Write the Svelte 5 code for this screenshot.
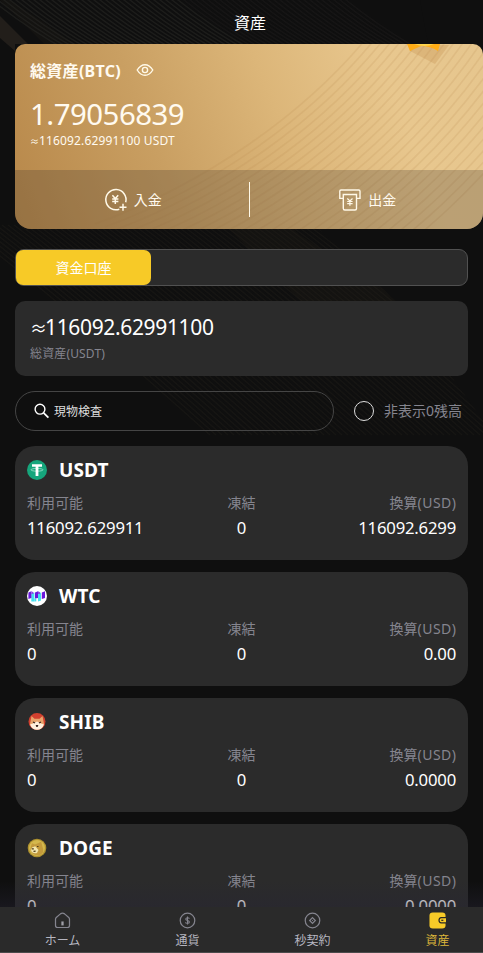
<script>
  const assets = [
    { name: 'USDT', free: '116092.629911', usd: '116092.6299' },
    { name: 'WTC', free: '0', usd: '0.00' },
    { name: 'SHIB', free: '0', usd: '0.0000' },
    { name: 'DOGE', free: '0', usd: '0.0000' },
  ];
  const tabs = ['ホーム', '通貨', '秒契約', '資産'];
  const lines = Array.from({ length: 60 }, (_, i) => i);
  const waves = Array.from({ length: 25 }, (_, i) => i);
</script>

<div class="app">
  <svg class="backdrop" viewBox="0 0 483 953" aria-hidden="true">
    <path d="M0 0L350 350L400 300L300 235Q150 90 10 0Z" fill="#171512" opacity=".6" />
    <path d="M0 16L28 44H15V51L0 38Z" fill="#221e1a" />
    {#each lines as i}
      <path d="M{i * 6 - 20} -10Q{i * 6 + 50} 50 {i * 6 + 150} 90" fill="none" stroke="#242321" stroke-width="1.4" opacity={i < 32 ? 0.7 : 0.35} />
      <path d="M{i * 6 - 40} 225Q{i * 6 + 60} 300 {i * 6 + 210} 435" fill="none" stroke="#26221d" stroke-width="1.4" opacity=".35" />
    {/each}
    <path d="M315 225L400 305L483 420V953H483V0H420Q440 120 483 225Z" fill="#0f0f0f" />
  </svg>

  <header>資産</header>

  <section class="gold">
    <svg class="pattern" viewBox="0 0 468 185" preserveAspectRatio="none" aria-hidden="true">
      {#each waves as i}
        <path d="M{80 + i * 10} {180 + i * 3}C{190 + i * 8} {140 + i * 3} {290 + i * 8} {70 + i * 3} {355 + i * 9} -10" fill="none" stroke="#ba8a4d" stroke-width="1.6" opacity=".17" />
      {/each}
      <path d="M395 7L420 20L434 1H393Z" fill="#b77a35" opacity=".22" />
      <path d="M392 0H425L423 7Q415 2 406 2L395 7Z" fill="#ffac16" />
      <path d="M399 0H419Q410 4 399 0Z" fill="#ffd54d" />
    </svg>
    <div class="balance">
      <div class="title">
        <b>総資産(BTC)</b>
        <svg width="18" height="14" viewBox="0 0 18 14" fill="none" stroke="#fff9e8" stroke-width="1.4"><path d="M1.2 7Q4.5 1.7 9 1.7T16.8 7Q13.5 12.3 9 12.3T1.2 7Z" /><circle cx="9" cy="7" r="2.6" /></svg>
      </div>
      <div class="btc">1.79056839</div>
      <div class="approx"><span class="about">≈</span>116092.62991100 USDT</div>
    </div>
    <div class="actions">
      <button>
        <svg width="24" height="24" viewBox="0 0 24 24" fill="none" stroke="#fff9e8" stroke-width="1.5"><path d="M15.3 21.2A10.1 10.1 0 1 1 21.7 14.2" /><path d="M8.4 7.2L11.3 10.5L14.2 7.2M11.3 10.5V16M8.2 11H14.4M8.2 13.5H14.4M19 15.8V22.8M15.5 19.3H22.5" /></svg>
        <span>入金</span>
      </button>
      <i></i>
      <button>
        <svg width="24" height="24" viewBox="0 0 24 24" fill="none" stroke="#fff9e8" stroke-width="1.4"><path d="M5.3 10.4H1.8V3.2Q1.8 2 3 2H20.7Q22 2 22 3.2V10.4H18.5M5.3 6.5V20.5Q5.3 22 6.8 22H17Q18.5 22 18.5 20.5V6.5Z" /><path d="M9.3 10.5L11.9 13L14.5 10.5M11.9 13V17.8M9.2 13.5H14.6M9.2 15.6H14.6" stroke-width="1.2" /></svg>
        <span>出金</span>
      </button>
    </div>
  </section>

  <div class="tabs"><span>資金口座</span></div>

  <section class="summary">
    <div class="sum"><span class="about">≈</span>116092.62991100</div>
    <div class="sumlabel">総資産(USDT)</div>
  </section>

  <div class="filter">
    <div class="search">
      <svg width="16" height="16" viewBox="0 0 16 16" fill="none" stroke="#fff" stroke-width="1.4"><circle cx="6" cy="6.2" r="4.9" /><path d="M9.6 9.8L14.4 14.6" stroke-width="1.7" /></svg>
      <span>現物検査</span>
    </div>
    <span class="radio"></span>
    <span class="hide">非表示0残高</span>
  </div>

  <main>
    {#each assets as a}
      <article>
        <div class="coin">
          {#if a.name === 'USDT'}
            <svg width="20" height="20" viewBox="0 0 20 20"><circle cx="10" cy="10" r="10" fill="#16a67c" /><ellipse cx="10" cy="9.8" rx="6" ry="1.4" fill="none" stroke="#a6e4d0" stroke-width=".8" /><path d="M5 4.2H15V6.8H11.4V16H8.6V6.8H5Z" fill="#fff" /></svg>
          {:else if a.name === 'WTC'}
            <svg width="20" height="20" viewBox="0 0 20 20"><circle cx="10" cy="10" r="10" fill="#fff" /><path d="M4.3 7.5L7.4 6.5V15.4H4.3ZM11 7.5L14 6.5V14.6L11 15.4Z" fill="#45dff0" /><path d="M7.4 12.5H9.3V15.4H7.4Z" fill="#45dff0" /><path d="M1.4 6.4L4.4 5.2V12L1.4 13ZM8 6.4L11 5.2V12L8 12.6ZM14.8 6.4L18 5.2V12L14.8 13Z" fill="#6a18dc" /><path d="M4.4 5.2L6.4 6.2V8H4.4ZM11 5.2L13 6.2V8H11Z" fill="#8a48e8" /></svg>
          {:else if a.name === 'SHIB'}
            <svg width="20" height="20" viewBox="0 0 20 20"><circle cx="10" cy="9.5" r="8.5" fill="#d2402f" /><path d="M4.5 4L7.5 6.8H12.5L15.5 4L17 12Q15 17.6 10 17.6Q5 17.6 3 12Z" fill="#e9a56c" /><path d="M3 12.5L6 11.5L10 9.5L14 11.5L17 12.5Q15 17.8 10 17.8Q5 17.8 3 12.5Z" fill="#fff1dd" /><path d="M6 10L8 11M14 10L12 11" stroke="#31201b" stroke-width="1.1" /><path d="M8.6 13H11.4L10.6 15H9.4Z" fill="#35211c" /></svg>
          {:else}
            <svg width="20" height="20" viewBox="0 0 20 20"><circle cx="10" cy="10" r="9.3" fill="#ad912f" /><circle cx="10" cy="10" r="8" fill="#d4b84d" /><path d="M5 5.3L8 6.5Q12 5 14.2 3.8L15.5 9Q18 14 13 17.3Q6 18 4 13Q3 10 5 5.3Z" fill="#c39a3c" /><path d="M5 9.5L8.3 8.2L11.5 12L10 15Q5 16 4 12Z" fill="#f2e6ad" /><path d="M4.8 10.8H6.8M10 8.5H11.5M6.5 13.4L8.6 13.2" stroke="#4b3818" stroke-width="1.2" /></svg>
          {/if}
          <b>{a.name}</b>
        </div>
        <div class="grid labels"><span>利用可能</span><span>凍結</span><span>換算<em>(USD)</em></span></div>
        <div class="grid values"><span>{a.free}</span><span>0</span><span>{a.usd}</span></div>
      </article>
    {/each}
  </main>

  <nav>
    {#each tabs as t, i}
      <div class="tab" class:active={i === 3}>
        <svg width="17" height="17" viewBox="0 0 18 18" fill="none" stroke="#85858f" stroke-width="1.3">
          {#if i === 0}
            <path d="M1.6 7.6Q1.6 6.6 2.4 5.8L6.8 2Q9 .6 11.2 2L15.6 5.8Q16.4 6.6 16.4 7.6V14.2Q16.4 16.4 14.2 16.4H3.8Q1.6 16.4 1.6 14.2Z" /><path d="M9 10V14.2" stroke-width="2.4" stroke="#a0a0a8" />
          {:else if i === 1}
            <circle cx="9" cy="9" r="7.7" /><path d="M11.1 7Q10.6 6 9 6T7.1 7.4Q7.1 8.6 9 9T11 10.6Q11 12 9 12T6.8 11M9 4.8V13.2" stroke-width="1.1" />
          {:else if i === 2}
            <circle cx="9" cy="9" r="7.7" /><path d="M9 6L12 9L9 12L6 9Z" /><circle cx="9" cy="9" r=".6" fill="#85858f" stroke="none" />
          {:else}
            <rect x=".5" y=".5" width="17" height="17" rx="3.5" fill="#f8cb28" stroke="none" /><path d="M18 6H13Q10.6 6.2 10.6 8.8T13 11.6H18" fill="#f8cb28" stroke="#292824" stroke-width="1.3" /><path d="M13 8.8H15.2" stroke="#292824" />
          {/if}
        </svg>
        <span>{t}</span>
      </div>
    {/each}
  </nav>
</div>

<style>
  :global(body) { margin: 0; background: #0f0f0f; }
  * { box-sizing: border-box; }
  .app {
    position: relative;
    width: 483px;
    height: 953px;
    overflow: hidden;
    display: flex;
    flex-direction: column;
    background: #0f0f0f;
    color: #fff;
    font-family: "Noto Sans", "Noto Sans CJK JP", sans-serif;
  }
  .backdrop { position: absolute; inset: 0; width: 483px; height: 953px; }
  header { position: relative; flex: none; height: 44px; padding-left: 17px; line-height: 47px; font-size: 16px; text-align: center; }
  .gold {
    position: relative;
    flex: none;
    width: 468px;
    height: 185px;
    margin-left: 15px;
    overflow: hidden;
    border-radius: 10px 10px 16px 16px;
    background: linear-gradient(68deg, #b78749 0%, #c99f62 32%, #dcb679 57%, #e8c78e 80%, #e6c68e 100%);
    color: #fffaf0;
  }
  .pattern { position: absolute; inset: 0; width: 468px; height: 185px; }
  .balance { position: relative; height: 126px; padding: 15px 15px 0; }
  .title { display: flex; align-items: center; gap: 15px; height: 22px; font-size: 16px; letter-spacing: .3px; }
  .btc { margin-top: 16px; font-size: 29.4px; line-height: 34px; letter-spacing: -.5px; }
  .about { display: inline-block; line-height: 1; text-align: center; letter-spacing: 0; }
  .approx { margin-top: 1px; font-size: 12px; line-height: 18px; letter-spacing: .15px; }
  .approx .about { width: 9px; font-size: 9px; }
  .actions { position: relative; display: flex; align-items: center; height: 59px; background: rgba(73, 62, 51, .28); }
  .actions button { display: flex; align-items: center; justify-content: center; gap: 6px; flex: 1 1 0; border: 0; padding: 0 0 0 2px; background: none; color: inherit; font: 14px/20px "Noto Sans CJK JP", sans-serif; }
  .actions span { margin-top: -2px; }
  .actions i + button { padding: 0 0 0 2px; }
  .actions i { width: 1px; height: 35px; background: #fff9e8; }
  .tabs { position: relative; flex: none; margin: 20px 15px 0; height: 37px; border: 1px solid #515151; border-radius: 9px; background: #2b2b2b; }
  .tabs span { display: block; width: 135px; height: 35px; border-radius: 7px; background: #f7ca27; font-size: 14px; line-height: 36px; text-align: center; }
  .summary { position: relative; flex: none; height: 75px; margin: 15px 15px 0; padding: 12px 15px; border-radius: 10px; background: #2b2b2b; }
  .sum { height: 28px; font-size: 21px; line-height: 28px; letter-spacing: -.35px; }
  .sum .about { width: 15px; font-size: 17px; }
  .sumlabel { margin-top: 3px; font-size: 12px; line-height: 20px; letter-spacing: .15px; color: #85858f; }
  .filter { position: relative; flex: none; display: flex; align-items: center; height: 40px; margin: 15px 15px 0; }
  .search { display: flex; align-items: center; width: 319px; height: 40px; padding-left: 18px; gap: 4px; border: 1px solid #454545; border-radius: 20px; font-size: 12px; color: #ddd; }
  .radio { width: 20px; height: 20px; margin: 0 10px 0 20px; border: 1px solid #ddd; border-radius: 50%; }
  .hide { margin-top: -2px; font-size: 14px; color: #85858f; white-space: nowrap; }
  main { position: relative; flex: none; display: flex; flex-direction: column; gap: 12px; margin: 15px 15px 0; }
  article { height: 114px; padding: 12px 12px 0; border-radius: 20px; background: #2b2b2b; }
  .coin { display: flex; align-items: center; gap: 12px; height: 24px; font-size: 19px; letter-spacing: .1px; }
  .grid { display: grid; grid-template-columns: 1fr 1fr 1fr; }
  .grid span:nth-child(2) { text-align: center; }
  .grid span:nth-child(3) { text-align: right; }
  .labels { margin-top: 11px; height: 20px; line-height: 20px; font-size: 14px; color: #85858f; }
  .labels em { font-style: normal; letter-spacing: .45px; margin-right: -.4px; }
  .values { margin-top: 3px; height: 24px; line-height: 24px; font-size: 16.7px; letter-spacing: -.2px; }
  nav { position: absolute; left: 0; right: 0; bottom: 0; display: flex; height: 46px; background: #2a2a2a; border-bottom: 1px solid #4b4b4b; }
  nav::before { content: ""; position: absolute; left: 0; right: 0; bottom: 100%; height: 26px; background: linear-gradient(transparent, rgba(38, 36, 52, .4)); }
  .tab { position: relative; flex: 0 0 125px; display: flex; flex-direction: column; align-items: center; padding-top: 5px; font-size: 12px; color: #b6b6c0; }
  .tab span { margin-top: 1px; line-height: 22px; }
  .active { color: #dcb63b; }
</style>
